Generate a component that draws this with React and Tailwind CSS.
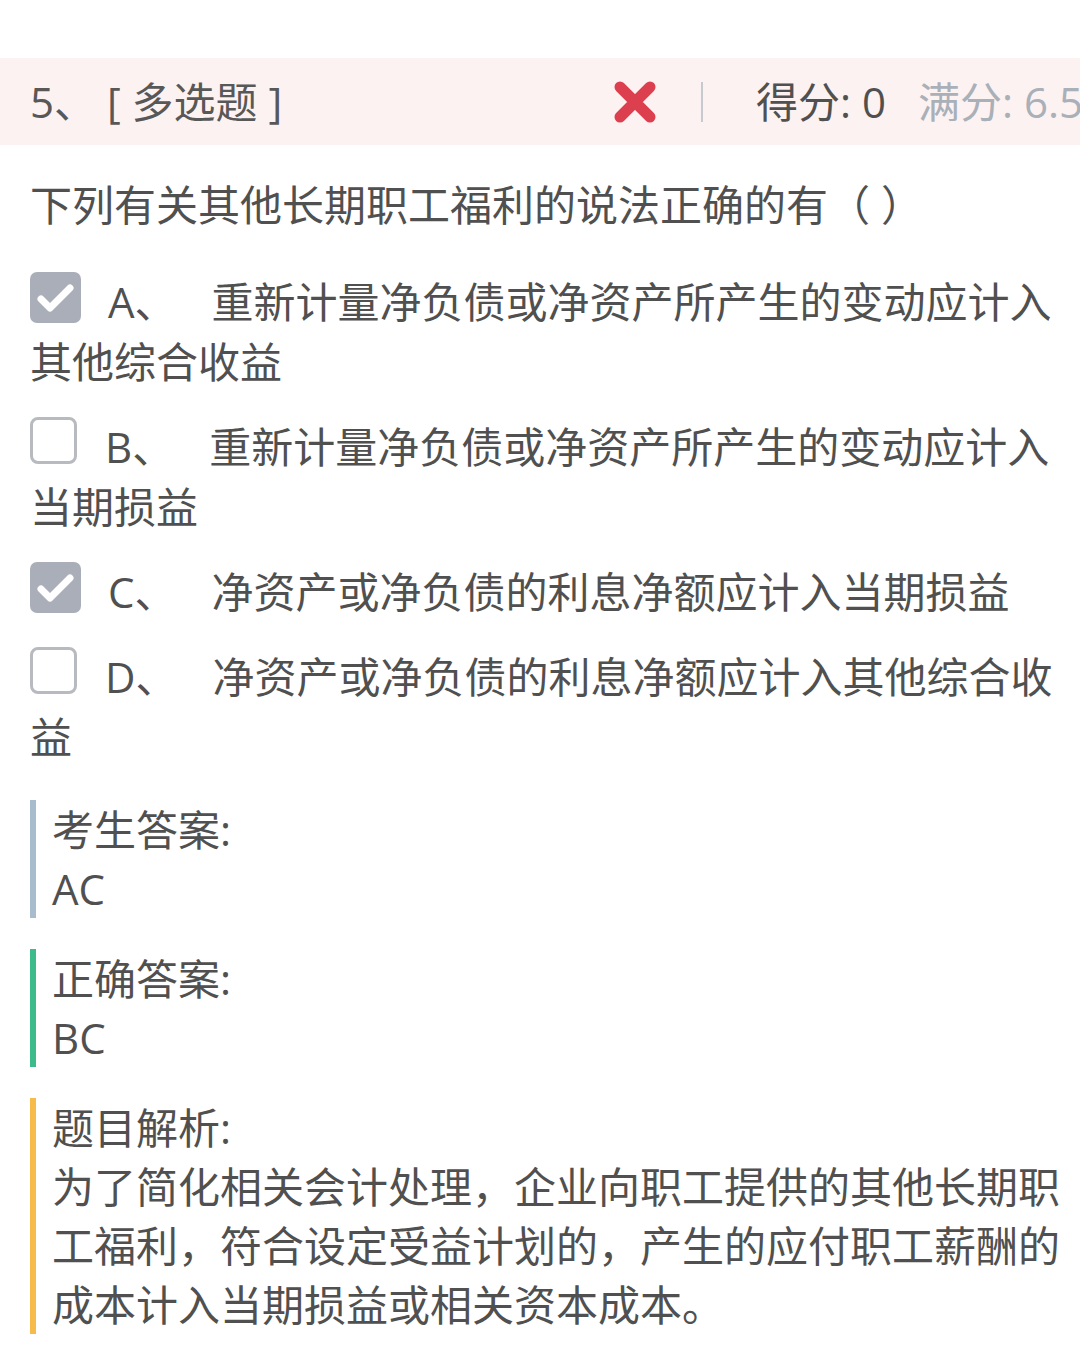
import React from 'react';

const FONT = { fontFamily: '"Open Sans", "Noto Sans CJK SC", sans-serif' };

const options = [
    { key: 'A', checked: true, text: '重新计量净负债或净资产所产生的变动应计入其他综合收益' },
    { key: 'B', checked: false, text: '重新计量净负债或净资产所产生的变动应计入当期损益' },
    { key: 'C', checked: true, text: '净资产或净负债的利息净额应计入当期损益' },
    { key: 'D', checked: false, text: '净资产或净负债的利息净额应计入其他综合收益' },
];

// Checkbox square drawn in CSS, tick as svg
const CheckBox = ({ checked }) =>
    checked ? (
        <span className="inline-block align-top w-[51px] h-[51px] rounded-[7px] bg-[#a9aeb9] mr-[27px]">
            <svg width="51" height="51" viewBox="0 0 51 51" className="block">
                <path d="M11 27 L20 36 L40 16" fill="none" stroke="#fff" strokeWidth="7" strokeLinecap="round" strokeLinejoin="round" />
            </svg>
        </span>
    ) : (
        <span className="inline-block align-top w-[47px] h-[47px] rounded-[8px] border-[3px] border-[#b7babf] bg-white mr-[28px]" />
    );

const AnswerBlock = ({ color, title, children }) => (
    <div className={`border-l-[6px] ${color} pl-[16px] text-[42px] leading-[59px] text-[#505050] mb-[31px]`}>
        <div>{title}</div>
        <div>{children}</div>
    </div>
);

const App = () => {
    return (
        <div className="bg-white min-h-[1365px] w-[1080px] overflow-hidden pt-[58px]" style={FONT}>
            {/* Header band */}
            <div className="flex items-center justify-between h-[87px] bg-[#fdf2f2] pl-[30px] whitespace-nowrap overflow-hidden">
                <div className="text-[42px] text-[#585858]">5、 [ 多选题 ]</div>
                <div className="flex items-center shrink-0 -mr-[3px]">
                    <svg width="44" height="44" viewBox="0 0 44 44">
                        <path d="M7 7 L37 37 M37 7 L7 37" stroke="#dc3f4d" strokeWidth="11" strokeLinecap="round" />
                    </svg>
                    <span className="w-[2px] h-[40px] bg-[#c6c9ce] ml-[44px] mr-[53px]" />
                    <span className="text-[42px] text-[#505050]">得分: 0</span>
                    <span className="text-[42px] text-[#a9b0b8] ml-[32px]">满分: 6.5</span>
                </div>
            </div>

            <div className="pl-[30px] pr-[10px]">
                <div className="mt-[30px] text-[42px] leading-[60px] text-[#505050]">
                    下列有关其他长期职工福利的说法正确的有（ ）
                </div>

                <div className="mt-[37px]">
                    {options.map((opt) => (
                        <div key={opt.key} className="text-[42px] leading-[60px] text-[#505050] mb-[25px]">
                            <CheckBox checked={opt.checked} />
                            <span>{opt.key}、</span>
                            <span className="ml-[35px]">{opt.text}</span>
                        </div>
                    ))}
                </div>

                <div className="mt-[33px]">
                    <AnswerBlock color="border-[#a9bccd]" title="考生答案:">AC</AnswerBlock>
                    <AnswerBlock color="border-[#3dbb8b]" title="正确答案:">BC</AnswerBlock>
                    <AnswerBlock color="border-[#f6bb4b]" title="题目解析:">
                        为了简化相关会计处理，企业向职工提供的其他长期职工福利，符合设定受益计划的，产生的应付职工薪酬的成本计入当期损益或相关资本成本。
                    </AnswerBlock>
                </div>
            </div>
        </div>
    );
};

export default App;
